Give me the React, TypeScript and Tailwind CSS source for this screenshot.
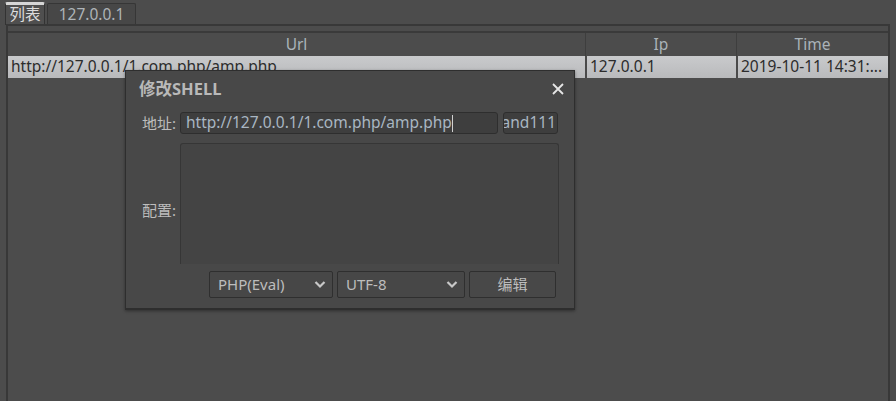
import React from "react"

const font = "font-['Noto_Sans','Noto_Sans_CJK_SC',sans-serif]"

const Chevron = () => (
  <svg width="12" height="9" viewBox="0 0 12 9" className="shrink-0">
    <path d="M1.5 2 L6 6.5 L10.5 2" fill="none" stroke="#c8c8c8" strokeWidth="2.2" />
  </svg>
)

const Select = ({ label, width }: { label: string; width: string }) => (
  <div
    className={`${width} h-[27px] flex items-center justify-between pl-[8px] pr-[6px] bg-[#474747] border border-[#2f2f2f] rounded-[2px] text-[15px] text-[#bdbdbd]`}
  >
    <span>{label}</span>
    <Chevron />
  </div>
)

export default function App() {
  return (
    <div className={`relative w-[896px] h-[401px] overflow-hidden bg-[#4c4c4c] ${font}`}>
      {/* tabs */}
      <div className="flex items-end h-[25px] pl-[5px] pt-[2px]">
        <div className="h-[23px] w-[40px] flex items-center justify-center bg-[#4f4f4f] border border-[#333] border-b-0 border-t-[3px] border-t-[#d6d6d6] rounded-t-[2px] text-[15.5px] text-[#dcdcdc]">
          列表
        </div>
        <div className="ml-[2px] h-[22px] w-[89px] flex items-center justify-center bg-[#474747] border border-[#363636] border-b-0 rounded-t-[2px] text-[15.5px] text-[#aeb4b8]">
          127.0.0.1
        </div>
      </div>

      {/* pane */}
      <div className="absolute left-[6px] right-[6px] top-[24px] bottom-[-2px] border-2 border-[#383838] border-b-0 bg-[#4c4c4c]">
        <div className="mt-[5px] border-t-2 border-[#3a3a3a]">
          {/* header */}
          <div className="flex h-[23px] text-[15.5px] text-[#aab3b9]">
            <div className="w-[577px] flex items-center justify-center">Url</div>
            <div className="w-[151px] flex items-center justify-center border-l border-[#3e3e3e]">Ip</div>
            <div className="flex-1 flex items-center justify-center border-l border-[#3e3e3e]">Time</div>
          </div>
          {/* row */}
          <div className="flex h-[22px] text-[15.5px] text-[#2c2c2c]">
            <div className="w-[577px] flex items-center pl-[3px] bg-gradient-to-b from-[#c9cacc] to-[#b9babc]">
              http://127.0.0.1/1.com.php/amp.php
            </div>
            <div className="w-[151px] flex items-center pl-[3px] border-l-2 border-[#4a4a4a] bg-gradient-to-b from-[#c9cacc] to-[#b9babc]">
              127.0.0.1
            </div>
            <div className="flex-1 flex items-center pl-[3px] border-l-2 border-[#4a4a4a] bg-gradient-to-b from-[#c9cacc] to-[#b9babc] whitespace-nowrap overflow-hidden">
              2019-10-11 14:31:...
            </div>
          </div>
        </div>
      </div>

      {/* dialog */}
      <div className="absolute left-[125px] top-[70px] w-[450px] h-[240px] bg-[#484848] border border-[#2e2e2e] border-b-2 shadow-[0_1px_3px_rgba(0,0,0,0.4)]">
        <div className="flex items-center justify-between h-[36px] pl-[13px] pr-[9px]">
          <span className="text-[16.5px] font-bold text-[#b9b9b9]">修改SHELL</span>
          <svg width="14" height="14" viewBox="0 0 14 14">
            <path d="M2 2 L12 12 M12 2 L2 12" stroke="#e6e6e6" strokeWidth="1.8" />
          </svg>
        </div>

        <div className="flex items-center h-[22px] mt-[5px] pl-[16px]">
          <span className="w-[38px] text-[15px] text-[#bdbdbd]">地址:</span>
          <div className="w-[318px] h-[22px] flex items-center pl-[5px] bg-[#3e3e3e] border border-[#2e2e2e] rounded-[3px] text-[15.5px] text-[#a9b6c2] overflow-hidden whitespace-nowrap">
            http://127.0.0.1/1.com.php/amp.php
            <span className="w-px h-[17px] bg-[#d0d0d0]" />
          </div>
          <div className="ml-[5px] w-[55px] h-[22px] flex items-center justify-end pr-[1px] bg-[#3e3e3e] border border-[#2e2e2e] rounded-[3px] text-[15.5px] text-[#a9b6c2] overflow-hidden whitespace-nowrap">
            and111
          </div>
        </div>

        <div className="flex items-start mt-[9px] pl-[16px]">
          <span className="w-[38px] pt-[56px] text-[15px] text-[#bdbdbd]">配置:</span>
          <div className="w-[379px] h-[121px] bg-[#444444] border border-[#363636] border-b-0 rounded-t-[3px]" />
        </div>

        <div className="flex items-center gap-[4px] mt-[7px] pl-[83px]">
          <Select label="PHP(Eval)" width="w-[124px]" />
          <Select label="UTF-8" width="w-[128px]" />
          <div className="w-[87px] h-[27px] flex items-center justify-center bg-[#484848] border border-[#2f2f2f] rounded-[2px] text-[15px] text-[#bdbdbd]">
            编辑
          </div>
        </div>
      </div>
    </div>
  )
}
